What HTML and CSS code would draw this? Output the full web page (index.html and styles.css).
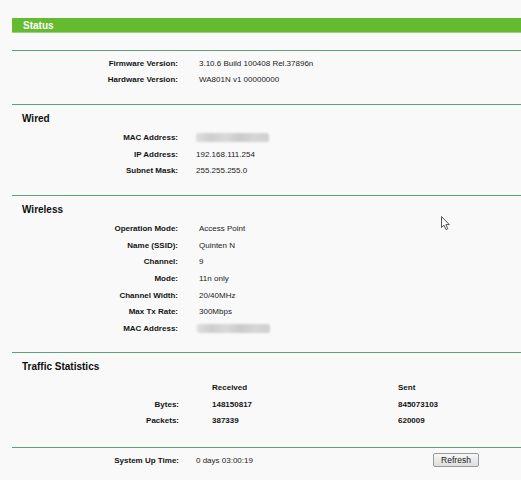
FILE: index.html
```html
<!DOCTYPE html>
<html>
<head>
<meta charset="utf-8">
<title>Status</title>
<link rel="stylesheet" href="styles.css">
</head>
<body>
<div class="page">
  <div class="titlebar">Status</div>

  <section class="sec sec-first">
    <div class="row"><span class="lbl">Firmware Version:</span><span class="val">3.10.6 Build 100408 Rel.37896n</span></div>
    <div class="row"><span class="lbl">Hardware Version:</span><span class="val">WA801N v1 00000000</span></div>
  </section>

  <section class="sec sec-wired">
    <h2 class="head">Wired</h2>
    <div class="row"><span class="lbl">MAC Address:</span><span class="val"><span class="blur"></span></span></div>
    <div class="row"><span class="lbl">IP Address:</span><span class="val">192.168.111.254</span></div>
    <div class="row"><span class="lbl">Subnet Mask:</span><span class="val">255.255.255.0</span></div>
  </section>

  <section class="sec">
    <h2 class="head">Wireless</h2>
    <div class="row"><span class="lbl">Operation Mode:</span><span class="val">Access Point</span></div>
    <div class="row"><span class="lbl">Name (SSID):</span><span class="val">Quinten N</span></div>
    <div class="row"><span class="lbl">Channel:</span><span class="val">9</span></div>
    <div class="row"><span class="lbl">Mode:</span><span class="val">11n only</span></div>
    <div class="row"><span class="lbl">Channel Width:</span><span class="val">20/40MHz</span></div>
    <div class="row"><span class="lbl">Max Tx Rate:</span><span class="val">300Mbps</span></div>
    <div class="row"><span class="lbl">MAC Address:</span><span class="val val-mac"><span class="blur"></span></span></div>
  </section>

  <section class="sec sec-traffic">
    <h2 class="head">Traffic Statistics</h2>
    <div class="trow"><span class="lbl"></span><span class="tval">Received</span><span class="tval">Sent</span></div>
    <div class="trow"><span class="lbl">Bytes:</span><span class="tval">148150817</span><span class="tval">845073103</span></div>
    <div class="trow"><span class="lbl">Packets:</span><span class="tval">387339</span><span class="tval">620009</span></div>
  </section>

  <section class="sec sec-uptime">
    <div class="urow"><span class="lbl">System Up Time:</span><span class="val">0 days 03:00:19</span><button class="btn" type="button">Refresh</button></div>
  </section>
</div>

<svg class="cursor" width="10" height="15" viewBox="0 0 10 15" aria-hidden="true">
  <path d="M0.5 0.5 L0.5 11.5 L3 9.2 L5 13.6 L6.8 12.8 L4.9 8.6 L8.3 8.6 Z" fill="#ffffff" stroke="#555555" stroke-width="1" stroke-linejoin="round"/>
</svg>
</body>
</html>
```

FILE: styles.css
```css
html, body {
  margin: 0;
  padding: 0;
  background: #f9f9f9;
}

body {
  font-family: "Liberation Sans", Arial, sans-serif;
  font-size: 8px;
  color: #1e1e1e;
  position: relative;
  min-height: 480px;
}

.page {
  padding-left: 12px;
  padding-top: 18px;
}

.titlebar {
  height: 14px;
  line-height: 15px;
  background: #64bb30;
  border-bottom: 1px solid #9fd27e;
  color: #ffffff;
  font-weight: bold;
  font-size: 10px;
  padding-left: 11px;
  margin-bottom: 17px;
}

.sec {
  border-top: 1px solid #5e9f7e;
  padding: 7px 0 15.5px;
}

.sec-first {
  padding-top: 4px;
  padding-bottom: 15.7px;
}

.sec-traffic {
  padding-top: 7.3px;
  padding-bottom: 18px;
}

.sec-uptime {
  padding-top: 3.7px;
  padding-bottom: 0;
}

.head {
  margin: 0 0 3.3px;
  padding-left: 10px;
  font-size: 10px;
  line-height: 14px;
  font-weight: bold;
  color: #0e0e0e;
}

.sec-traffic .head {
  margin-bottom: 4.7px;
}

.row {
  display: grid;
  grid-template-columns: 166px 1fr;
  column-gap: 21px;
  height: 16.67px;
  align-items: center;
}

.sec-wired .row {
  column-gap: 18px;
}

.lbl {
  text-align: right;
  font-weight: bold;
  color: #141414;
}

.val {
  color: #222222;
  white-space: nowrap;
}

.val-mac {
  margin-left: -2px;
}

.blur {
  display: inline-block;
  vertical-align: middle;
  width: 73px;
  height: 9px;
  background: linear-gradient(90deg, #dedede 0%, #cecece 20%, #d9d9d9 40%, #cbcbcb 60%, #d6d6d6 80%, #d0d0d0 100%);
  filter: blur(1px);
  border-radius: 2px;
}

.trow {
  display: grid;
  grid-template-columns: 200px 186px 1fr;
  height: 16.67px;
  align-items: center;
}

.trow .lbl {
  padding-right: 33px;
}

.tval {
  font-weight: bold;
  color: #141414;
}

.urow {
  display: grid;
  grid-template-columns: 167px 220px auto;
  column-gap: 17px;
  height: 16.67px;
  align-items: center;
  justify-content: start;
}

.btn {
  width: 46px;
  height: 14px;
  padding: 0;
  font-family: "Liberation Sans", Arial, sans-serif;
  font-size: 8.5px;
  line-height: 12px;
  color: #1a1a1a;
  background: linear-gradient(#f7f7f7, #dedede);
  border: 1px solid #9a9a9a;
  border-radius: 2px;
}

.cursor {
  position: absolute;
  left: 441px;
  top: 216px;
}
```
